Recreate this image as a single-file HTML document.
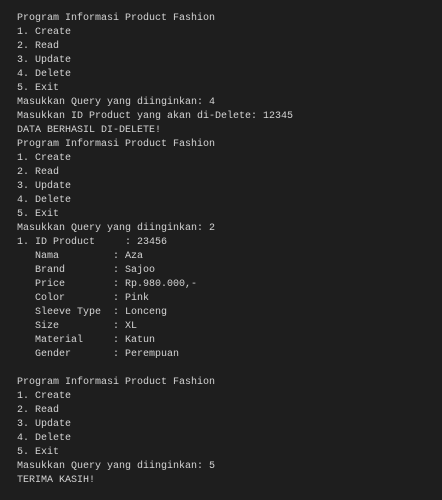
<!DOCTYPE html>
<html><head><style>
html,body{margin:0;padding:0;background:#1e1e1e;width:442px;height:500px;overflow:hidden}
pre{position:absolute;left:17px;top:12px;margin:0;font-family:"Liberation Mono","DejaVu Sans Mono",monospace;font-size:10px;line-height:14px;color:#d4d4d4}
</style></head><body><pre>Program Informasi Product Fashion
1. Create
2. Read
3. Update
4. Delete
5. Exit
Masukkan Query yang diinginkan: 4
Masukkan ID Product yang akan di-Delete: 12345
DATA BERHASIL DI-DELETE!
Program Informasi Product Fashion
1. Create
2. Read
3. Update
4. Delete
5. Exit
Masukkan Query yang diinginkan: 2
1. ID Product     : 23456
   Nama         : Aza
   Brand        : Sajoo
   Price        : Rp.980.000,-
   Color        : Pink
   Sleeve Type  : Lonceng
   Size         : XL
   Material     : Katun
   Gender       : Perempuan

Program Informasi Product Fashion
1. Create
2. Read
3. Update
4. Delete
5. Exit
Masukkan Query yang diinginkan: 5
TERIMA KASIH!</pre></body></html>
